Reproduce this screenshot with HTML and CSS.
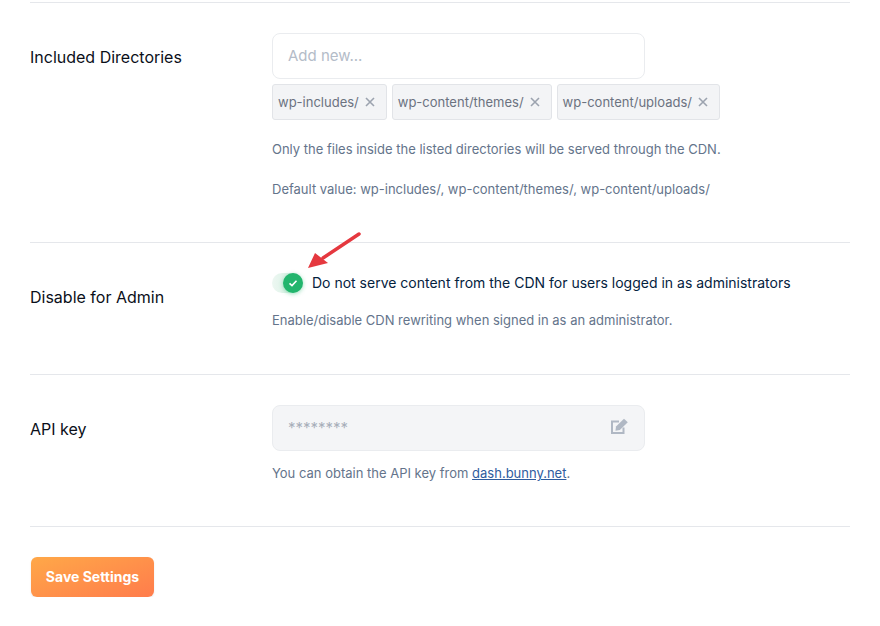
FILE: index.html
```html
<!DOCTYPE html>
<html lang="en">
<head>
    <meta charset="UTF-8">
    <title>CDN Settings</title>
    <link rel="stylesheet" href="styles.css">
</head>
<body>
    <div class="settings">
        <div class="row row-dirs">
            <div class="label">Included Directories</div>
            <div class="field">
                <div class="input placeholder">Add new...</div>
                <div class="tags">
                    <span class="tag">wp-includes/<svg class="x" viewBox="0 0 10 10"><path d="M1 1L9 9M9 1L1 9"/></svg></span>
                    <span class="tag">wp-content/themes/<svg class="x" viewBox="0 0 10 10"><path d="M1 1L9 9M9 1L1 9"/></svg></span>
                    <span class="tag">wp-content/uploads/<svg class="x" viewBox="0 0 10 10"><path d="M1 1L9 9M9 1L1 9"/></svg></span>
                </div>
                <p class="help help-first">Only the files inside the listed directories will be served through the CDN.</p>
                <p class="help help-second">Default value: wp-includes/, wp-content/themes/, wp-content/uploads/</p>
            </div>
        </div>

        <div class="row row-admin">
            <div class="label">Disable for Admin</div>
            <div class="field">
                <div class="toggle-line">
                    <span class="toggle">
                        <span class="knob">
                            <svg viewBox="0 0 12 12"><path d="M2.5 6.3L5 8.6L9.5 3.8"/></svg>
                        </span>
                    </span>
                    <span class="toggle-text">Do not serve content from the CDN for users logged in as administrators</span>
                </div>
                <p class="help help-toggle">Enable/disable CDN rewriting when signed in as an administrator.</p>
            </div>
            <svg class="arrow" viewBox="0 0 60 50"><path class="shaft" d="M52 3L16 27"/><path class="head" d="M1 37L8 22L21 32Z"/></svg>
        </div>

        <div class="row row-key">
            <div class="label">API key</div>
            <div class="field">
                <div class="input input-disabled">
                    <span class="stars">********</span>
                    <svg class="edit" viewBox="0 0 18 16">
                        <path class="edit-box" d="M12.500 9.500V15H1V3.500H8"/>
                        <path class="edit-pen" d="M5 8.500L13 .8L16.800 4.300L8.800 12L4.500 12.800Z"/>
                    </svg>
                </div>
                <p class="help help-key">You can obtain the API key from <a href="#">dash.bunny.net</a>.</p>
            </div>
        </div>

        <div class="actions">
            <button class="save">Save Settings</button>
        </div>
    </div>
</body>
</html>
```

FILE: styles.css
```css
body {
    margin: 0;
    background: #fff;
    font-family: Inter, "Liberation Sans", sans-serif;
    color: #04223e;
}
.settings {
    width: 820px;
    margin-left: 30px;
    border-top: 1px solid #e5e7eb;
    margin-top: 2px;
}
.row {
    display: flex;
    align-items: flex-start;
    position: relative;
    border-bottom: 1px solid #e5e7eb;
}
.row-dirs {
    height: 239px;
}
.row-admin {
    height: 131px;
}
.row-key {
    height: 151px;
}
.label {
    width: 242px;
    flex-shrink: 0;
    margin-top: 44px;
    font-size: 16px;
    line-height: 20px;
    color: #0b0f19;
}
.field {
    flex: 1;
    padding-top: 30px;
}
.input {
    width: 373px;
    height: 46px;
    box-sizing: border-box;
    border: 1px solid #eaecef;
    border-radius: 8px;
    padding: 0 15px;
    display: flex;
    align-items: center;
    justify-content: space-between;
    font-size: 15px;
}
.placeholder {
    color: #b4bcc8;
    padding-bottom: 2px;
}
.input-disabled {
    background: #f4f5f7;
    padding-bottom: 2px;
}
.stars {
    color: #a8afba;
    font-size: 15px;
}
.edit {
    width: 18px;
    height: 16px;
    margin-top: -2px;
}
.edit-box {
    fill: none;
    stroke: #b0b8c4;
    stroke-width: 2;
}
.edit-pen {
    fill: #b0b8c4;
}
.tags {
    display: flex;
    gap: 5px;
    margin-top: 5px;
}
.tag {
    display: flex;
    align-items: center;
    height: 36px;
    box-sizing: border-box;
    padding: 0 5px;
    background: #f3f4f6;
    border: 1px solid #e2e4e8;
    border-radius: 3px;
    font-size: 13px;
    color: #6b7280;
    white-space: pre;
}
.x {
    width: 10px;
    height: 10px;
    margin-left: 6px;
    margin-right: 6px;
}
.x path {
    fill: none;
    stroke: #9ca3af;
    stroke-width: 1.6;
}
.help {
    margin: 0;
    font-size: 13px;
    line-height: 20px;
    color: #64748b;
}
.help-first {
    margin-top: 19px;
}
.help-second {
    margin-top: 20px;
}
.toggle-line {
    display: flex;
    align-items: center;
    height: 20px;
}
.toggle {
    width: 30px;
    height: 20px;
    border-radius: 10px;
    background: linear-gradient(90deg, #edf7f2, #cdeedd);
    position: relative;
    flex-shrink: 0;
}
.knob {
    position: absolute;
    right: -1px;
    top: 0;
    width: 20px;
    height: 20px;
    border-radius: 50%;
    background: #22b56d;
    box-shadow: 0 1px 4px rgba(34, 181, 109, 0.45);
    display: flex;
    align-items: center;
    justify-content: center;
}
.knob svg {
    width: 12px;
    height: 12px;
}
.knob path {
    fill: none;
    stroke: #fff;
    stroke-width: 1.6;
}
.toggle-text {
    margin-left: 10px;
    font-size: 14px;
    color: #04223e;
    position: relative;
    top: -1px;
}
.help-toggle {
    margin-top: 17px;
}
.help-key {
    margin-top: 12px;
}
.help a {
    color: #2f5c9e;
}
.arrow {
    position: absolute;
    left: 277px;
    top: -12px;
    width: 60px;
    height: 50px;
}
.shaft {
    fill: none;
    stroke: #e5383f;
    stroke-width: 3.500;
    stroke-linecap: round;
}
.head {
    fill: #e5383f;
}
.actions {
    padding-top: 30px;
}
.save {
    width: 123px;
    height: 40px;
    margin-left: 1px;
    padding: 0 0 2px;
    border: none;
    border-radius: 6px;
    background: linear-gradient(160deg, #ffa848, #ff7c4c);
    color: #fff;
    font-family: Inter, "Liberation Sans", sans-serif;
    font-size: 14px;
    font-weight: 700;
    box-shadow: 0 1px 2px rgba(0, 0, 0, 0.1);
}
```
